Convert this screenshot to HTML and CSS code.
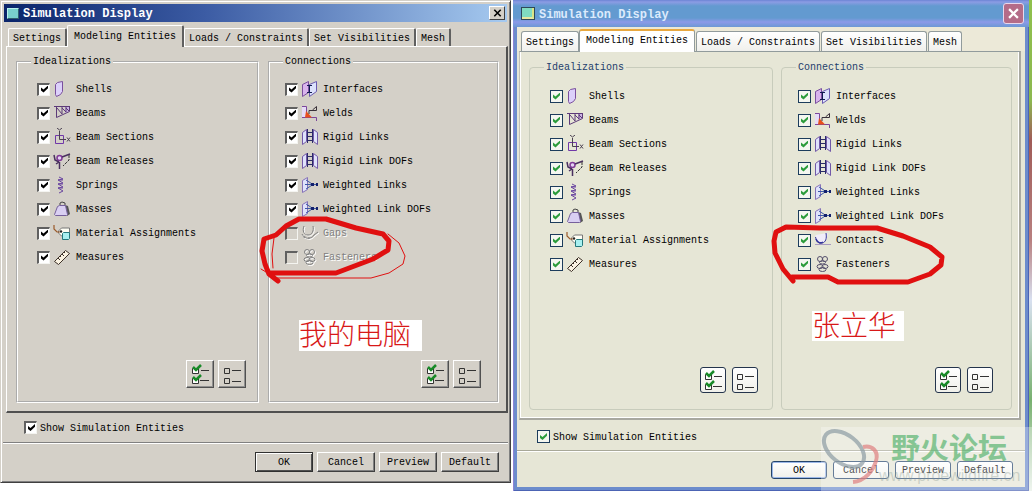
FILE: index.html
```
<!DOCTYPE html>
<html lang="en">
<head>
	<meta charset="utf-8">
	<title>Simulation Display</title>
	<link rel="stylesheet" href="styles.css">
</head>
<body>
	<!-- icon set, 18x18 grid -->
	<svg class="sprite" aria-hidden="true">
		<symbol id="i-shell" viewBox="0 0 18 18"><path d="M2.500 4.500l2-2 5-1v10l-2 3-4 2-1-2z" fill="#dcd0fa" stroke="#7a4f9e"/></symbol>
		<symbol id="i-beam" viewBox="0 0 18 18"><path d="M12 3h5v4l-5 2z" fill="#cbb4e4"/><path d="M1 2.500h16M16.500 2v5.500L3.500 13.500V3M4 4l5 6V3M9 4l4 4V3M13 4l3 3" fill="none" stroke="#5c3a78"/></symbol>
		<symbol id="i-section" viewBox="0 0 18 18"><path d="M2.500 7.500h8v8h-8z" fill="none" stroke="#7038a8"/><path d="M6.500 3v8.500H13M4 0l2.500 2L9 0M14 9.500l3 4M17 9.500l-3 4" fill="none" stroke="#4a4050"/></symbol>
		<symbol id="i-release" viewBox="0 0 18 18"><circle cx="6.500" cy="6" r="2.500" fill="#e4d4f4" stroke="#803a98" stroke-width="1.500"/><path d="M1 3l1 5 4 2M6.500 10v7M3 12l3-2M9 5l8-3" fill="none" stroke="#4a3060" stroke-width="1.500"/><path d="M16 3v5l-6 6" fill="none" stroke="#333" stroke-dasharray="3 1"/></symbol>
		<symbol id="i-spring" viewBox="0 0 18 18"><path d="M6 1l4 2-5 1 5 3-5 1 5 3-5 1 5 3-4 2M5 4h5M5 8h5M5 12h5" fill="none" stroke="#6a46a0"/></symbol>
		<symbol id="i-mass" viewBox="0 0 18 18"><path d="M12 5l3 1 2 8-3 2z" fill="#555"/><path d="M1.500 14.500l3-8 2-1h6l2 9-1 1h-11z" fill="#d9cff2" stroke="#76609c"/><path d="M7 5V3l2-1 3 1v2" fill="none" stroke="#444"/></symbol>
		<symbol id="i-material" viewBox="0 0 18 18"><path d="M5.500 7l3-3h8v8h-8l-3-3z" fill="#fffef4" stroke="#777"/><circle cx="8" cy="7.500" r="1.200" fill="#222"/><path d="M1 1v4l3 3h3" fill="none" stroke="#9a5a2a" stroke-width="1.200"/><path d="M9.500 9.500l1-1h6v6l-1 1h-6z" fill="#a8f0f0" stroke="#24787c"/></symbol>
		<symbol id="i-measure" viewBox="0 0 18 18"><path d="M1.500 13.500l11-11 4 3-11 11z" fill="#fbf3e2" stroke="#3c3028"/><path d="M5 10l2 2M7 8l1 1M9 6l2 2M11 4l1 1" stroke="#3c3028"/></symbol>
		<symbol id="i-interface" viewBox="0 0 18 18"><path d="M1.500 4.500l6-3v11l-6 4z" fill="#d8b4ec" stroke="#7a4f9e"/><path d="M8.500 4.500l7-3v10l-7 5z" fill="#dce2fc" stroke="#6a5ab0"/><path d="M6 5.500h5M8.500 5v8M6 12.500h5" stroke="#111a50"/></symbol>
		<symbol id="i-weld" viewBox="0 0 18 18"><path d="M1 3h5v11H1z" fill="#e6dcf8"/><path d="M1 2.500h4.500V10M1 13.500h14.500V17" fill="none" stroke="#7c469c"/><path d="M5 7l6 6.500H4z" fill="#e8501c"/><path d="M8 10V6.500h7.500v-4l-4 3.500" fill="none" stroke="#383038"/></symbol>
		<symbol id="i-rigid" viewBox="0 0 18 18"><path d="M1.500 4.500l4-3v12l-4 3zM12.500 1.500l4 3v12l-4-3z" fill="#dfe2fb" stroke="#7259a8"/><path d="M6.500 1v14M11.500 1v14M6 4.500h6M6 8.500h6M6 12.500h6" fill="none" stroke="#2b2b68"/></symbol>
		<symbol id="i-weighted" viewBox="0 0 18 18"><path d="M1.500 4.500l5-3v12l-5 3z" fill="#dfe2fb" stroke="#8672b8"/><path d="M5 4l7 4.500L5 13M4 8.500h12" fill="none" stroke="#3c58a8"/><path d="M10 7h3v3h-3zM15 7h2v3h-2z" fill="#13206c"/></symbol>
		<symbol id="i-contact" viewBox="0 0 18 18"><path d="M1.500 4c0 6 3 8 6 8s6-3 6-10" fill="#f0ecfa"/><path d="M1.500 6c1 5 4 7 7 6s4.500-4 3.500-10" fill="none" stroke="#34349a"/><path d="M2 8c1 3 4 5 7 3" fill="none" stroke="#34349a" stroke-width="1.500"/><path d="M1 13.500h16" stroke="#a79ac0"/></symbol>
		<symbol id="i-gap" viewBox="0 0 18 18"><path d="M3 2c-2 5 0 9 4 9s6-4 5-9M1 10c2 5 9 6 12 1M13 11l4-3M4 12l-1 2M8 13v2" fill="none" stroke="#808080"/></symbol>
		<symbol id="i-fastener" viewBox="0 0 18 18"><g fill="none" stroke="currentColor"><ellipse cx="6" cy="4" rx="2.500" ry="2.500"/><ellipse cx="11" cy="4" rx="2.500" ry="2.500"/><ellipse cx="8.500" cy="7.500" rx="3" ry="1.500"/><ellipse cx="6" cy="11.500" rx="3" ry="2"/><ellipse cx="11" cy="11.500" rx="3" ry="2"/><ellipse cx="8.500" cy="14.500" rx="3.500" ry="2"/></g></symbol>
		<symbol id="i-all" viewBox="0 0 20 20"><path d="M2.500 4.500h6v5h-6zM2.500 14.500h6v5h-6z" fill="#fff" stroke="#333"/><path d="M11 6.500h8M10 16.500h9" stroke="#333"/><path d="M3 3l3 3 5-5M3 13l3 3 5-5" fill="none" stroke="#188a28" stroke-width="2.500"/></symbol>
		<symbol id="i-none" viewBox="0 0 20 20"><path d="M2.500 4.500h5v5h-5zM2.500 14.500h5v5h-5z" fill="none" stroke="#333"/><path d="M10 6.500h9M10 17.500h9" stroke="#333"/></symbol>
	</svg>

	<main class="desktop">
		<section class="window classic">
			<header class="titlebar">
				<span class="appicon"></span>
				<h1>Simulation Display</h1>
				<button class="close" type="button" aria-label="Close"><svg viewBox="0 0 10 10"><path d="M1 1l8 8M9 1l-8 8"/></svg></button>
			</header>
			<div class="tabs" role="tablist">
				<button type="button" role="tab">Settings</button>
				<button type="button" role="tab" class="active" aria-selected="true">Modeling Entities</button>
				<button type="button" role="tab">Loads / Constraints</button>
				<button type="button" role="tab">Set Visibilities</button>
				<button type="button" role="tab">Mesh</button>
			</div>
			<div class="panel">
				<fieldset class="group ideal">
					<legend>Idealizations</legend>
					<ul>
						<li><label><input type="checkbox" checked><svg><use href="#i-shell"/></svg>Shells</label></li>
						<li><label><input type="checkbox" checked><svg><use href="#i-beam"/></svg>Beams</label></li>
						<li><label><input type="checkbox" checked><svg><use href="#i-section"/></svg>Beam Sections</label></li>
						<li><label><input type="checkbox" checked><svg><use href="#i-release"/></svg>Beam Releases</label></li>
						<li><label><input type="checkbox" checked><svg><use href="#i-spring"/></svg>Springs</label></li>
						<li><label><input type="checkbox" checked><svg><use href="#i-mass"/></svg>Masses</label></li>
						<li><label><input type="checkbox" checked><svg><use href="#i-material"/></svg>Material Assignments</label></li>
						<li><label><input type="checkbox" checked><svg><use href="#i-measure"/></svg>Measures</label></li>
					</ul>
					<div class="tools">
						<button type="button" aria-label="Select all"><svg><use href="#i-all"/></svg></button>
						<button type="button" aria-label="Select none"><svg><use href="#i-none"/></svg></button>
					</div>
				</fieldset>
				<fieldset class="group conn">
					<legend>Connections</legend>
					<ul>
						<li><label><input type="checkbox" checked><svg><use href="#i-interface"/></svg>Interfaces</label></li>
						<li><label><input type="checkbox" checked><svg><use href="#i-weld"/></svg>Welds</label></li>
						<li><label><input type="checkbox" checked><svg><use href="#i-rigid"/></svg>Rigid Links</label></li>
						<li><label><input type="checkbox" checked><svg><use href="#i-rigid"/></svg>Rigid Link DOFs</label></li>
						<li><label><input type="checkbox" checked><svg><use href="#i-weighted"/></svg>Weighted Links</label></li>
						<li><label><input type="checkbox" checked><svg><use href="#i-weighted"/></svg>Weighted Link DOFs</label></li>
						<li class="off"><label><input type="checkbox" disabled><svg><use href="#i-gap"/></svg>Gaps</label></li>
						<li class="off"><label><input type="checkbox" disabled><svg><use href="#i-fastener"/></svg>Fasteners</label></li>
					</ul>
					<div class="tools">
						<button type="button" aria-label="Select all"><svg><use href="#i-all"/></svg></button>
						<button type="button" aria-label="Select none"><svg><use href="#i-none"/></svg></button>
					</div>
				</fieldset>
			</div>
			<div class="option"><label><input type="checkbox" checked>Show Simulation Entities</label></div>
			<footer class="actions">
				<button type="button" class="default">OK</button>
				<button type="button">Cancel</button>
				<button type="button">Preview</button>
				<button type="button">Default</button>
			</footer>
			<svg class="marks" aria-hidden="true">
				<path class="thick" d="M277 280l-9-7-4-10-3-13 2-12 12-4 10-9 13-7h27l30 9 27 6 6 7-1 9-15 9-37 14h-65"/>
				<path d="M273 237l-2 16 1 14M387 233l11 9 6 13-2 8-14 9-18 5h-95l-15-9"/>
			</svg>
			<p class="note">我的电脑</p>
		</section>

		<section class="window xp">
			<header class="titlebar">
				<span class="appicon"></span>
				<h1>Simulation Display</h1>
				<button class="close" type="button" aria-label="Close"><svg viewBox="0 0 10 10"><path d="M1 1l8 8M9 1l-8 8"/></svg></button>
			</header>
			<div class="tabs" role="tablist">
				<button type="button" role="tab">Settings</button>
				<button type="button" role="tab" class="active" aria-selected="true">Modeling Entities</button>
				<button type="button" role="tab">Loads / Constraints</button>
				<button type="button" role="tab">Set Visibilities</button>
				<button type="button" role="tab">Mesh</button>
			</div>
			<div class="panel">
				<fieldset class="group ideal">
					<legend>Idealizations</legend>
					<ul>
						<li><label><input type="checkbox" checked><svg><use href="#i-shell"/></svg>Shells</label></li>
						<li><label><input type="checkbox" checked><svg><use href="#i-beam"/></svg>Beams</label></li>
						<li><label><input type="checkbox" checked><svg><use href="#i-section"/></svg>Beam Sections</label></li>
						<li><label><input type="checkbox" checked><svg><use href="#i-release"/></svg>Beam Releases</label></li>
						<li><label><input type="checkbox" checked><svg><use href="#i-spring"/></svg>Springs</label></li>
						<li><label><input type="checkbox" checked><svg><use href="#i-mass"/></svg>Masses</label></li>
						<li><label><input type="checkbox" checked><svg><use href="#i-material"/></svg>Material Assignments</label></li>
						<li><label><input type="checkbox" checked><svg><use href="#i-measure"/></svg>Measures</label></li>
					</ul>
					<div class="tools">
						<button type="button" aria-label="Select all"><svg><use href="#i-all"/></svg></button>
						<button type="button" aria-label="Select none"><svg><use href="#i-none"/></svg></button>
					</div>
				</fieldset>
				<fieldset class="group conn">
					<legend>Connections</legend>
					<ul>
						<li><label><input type="checkbox" checked><svg><use href="#i-interface"/></svg>Interfaces</label></li>
						<li><label><input type="checkbox" checked><svg><use href="#i-weld"/></svg>Welds</label></li>
						<li><label><input type="checkbox" checked><svg><use href="#i-rigid"/></svg>Rigid Links</label></li>
						<li><label><input type="checkbox" checked><svg><use href="#i-rigid"/></svg>Rigid Link DOFs</label></li>
						<li><label><input type="checkbox" checked><svg><use href="#i-weighted"/></svg>Weighted Links</label></li>
						<li><label><input type="checkbox" checked><svg><use href="#i-weighted"/></svg>Weighted Link DOFs</label></li>
						<li><label><input type="checkbox" checked><svg><use href="#i-contact"/></svg>Contacts</label></li>
						<li><label><input type="checkbox" checked><svg><use href="#i-fastener"/></svg>Fasteners</label></li>
					</ul>
					<div class="tools">
						<button type="button" aria-label="Select all"><svg><use href="#i-all"/></svg></button>
						<button type="button" aria-label="Select none"><svg><use href="#i-none"/></svg></button>
					</div>
				</fieldset>
			</div>
			<div class="option"><label><input type="checkbox" checked>Show Simulation Entities</label></div>
			<footer class="actions">
				<button type="button" class="default">OK</button>
				<button type="button">Cancel</button>
				<button type="button">Preview</button>
				<button type="button">Default</button>
			</footer>
			<svg class="marks" aria-hidden="true">
				<path class="thick" d="M280 281l-10-12-8-16-1-12 2-9 10-5 34 1h57l26 8 27 11 12 10-1 8-11 9-22 8h-70l-10-5h-36"/>
			</svg>
			<p class="note">张立华</p>
			<!-- forum watermark -->
			<div class="watermark">
				<svg viewBox="0 0 64 64">
					<ellipse cx="23" cy="22" rx="23" ry="14" transform="rotate(38 23 22)" stroke="#8d9ca4"/>
					<path d="M42 20c9-2 16 4 13 14s-11 20-23 21" stroke="#e08080"/>
				</svg>
				<strong>野火论坛</strong>
				<span>www.proewildfire.cn</span>
			</div>
		</section>
	</main>
</body>
</html>
```
FILE: styles.css
```
*{ margin: 0; padding: 0; box-sizing: border-box; }
body{ background: #fff; color: #000; font: 10px/12px "Liberation Mono", "Noto Sans CJK SC", monospace; }
ul{ list-style: none; }
button, input{ font: inherit; color: inherit; }
.sprite{ position: absolute; width: 0; height: 0; }

.desktop{ display: grid; grid-template-columns: 511fr 516fr; column-gap: 2px; align-items: start; padding-right: 3px; background: linear-gradient(#8fc04c, #8cb850 100px, #a05c58 140px, #b88080 240px, #d8e0f0 300px, #78b070 400px, #e8f0e8) right / 3px 100% no-repeat; }
.window{ position: relative; }

/* title bar */
.titlebar{ display: flex; align-items: center; }
.titlebar h1{ flex: 1; padding-top: 2px; font-size: 12px; line-height: 16px; color: #fff; }
.close{ display: flex; align-items: center; justify-content: center; }
.close svg{ flex: none; fill: none; stroke: currentColor; stroke-width: 2; }

/* tabs and panel */
.tabs{ display: flex; align-items: flex-end; }
.tabs button{ border: 0; white-space: nowrap; }
.panel{ display: grid; }
.group{ min-width: 0; }
.group legend{ margin-left: 13px; padding: 1px 2px 0; height: 13px; }
/* the face sits high in its line, so text gets 1px more above than the boxes */
.group label, .option label{ display: flex; align-items: center; padding-top: 2px; }
.group label input, .group label svg, .option input{ margin-bottom: 2px; }
.group li label{ height: 24px; }
.group li svg{ width: 18px; height: 18px; margin-left: 3px; margin-right: 5px; color: #55506c; }
.conn li svg{ margin-right: 4px; }
.tools{ display: flex; justify-content: flex-end; margin-top: 91px; }
.tools button{ display: flex; align-items: center; justify-content: center; padding: 0; }
.tools svg{ flex: none; width: 20px; height: 20px; }
input{ appearance: none; flex: none; width: 13px; height: 13px; }
input:checked::before{ content: ""; display: block; width: 7px; height: 7px; clip-path: polygon(0 28%, 36% 58%, 100% 0, 100% 40%, 36% 100%, 0 70%); }
.option input{ margin-right: 3px; }
.actions{ display: flex; justify-content: flex-end; }
.actions button{ padding-top: 1px; }

/* grey classic window */
.classic{ padding: 2px 2px 0; background: #d4d0c8; border: 1px solid; border-color: #d4d0c8 #404040 #404040 #d4d0c8; box-shadow: inset 1px 1px #fff, inset -1px -1px #808080; }
.classic .titlebar{ height: 18px; margin: 1px; padding: 0 2px 0 3px; background: linear-gradient(to right, #0a246a, #3c5ca4 40%, #a6caf0); }
.classic .appicon{ width: 12px; height: 11px; margin-right: 4px; background: #78d0cc; border: 1px solid; border-color: #b8f0ec #30606c #30606c #b8f0ec; }
.classic .close{ width: 16px; height: 14px; background: #d4d0c8; border: 1px solid; border-color: #fff #404040 #404040 #fff; }
.classic .close svg{ width: 9px; height: 8px; }
.classic .tabs{ height: 22px; padding-left: 5px; margin-top: 2px; }
.classic .tabs button{ height: 18px; padding: 3px 4px 0; background: #d4d0c8; border: solid; border-width: 1px 2px 0 1px; border-color: #fff #606060 #fff #fff; border-radius: 2px 2px 0 0; }
.classic .tabs .active{ height: 22px; margin-bottom: -1px; padding: 1px 6px 0; }
.classic .panel{ grid-template-columns: 243fr 231fr; column-gap: 9px; margin: 0 0 0 3px; padding: 8px 7px 8px 9px; border: solid; border-width: 1px 2px 2px 1px; border-color: #fff #505050 #505050 #fff; }
.classic .group{ border: 2px groove #fff; }
.classic ul{ padding: 9px 0 0 19px; }
.classic .conn ul{ padding-left: 15px; }
.classic .tools{ gap: 4px; padding: 0 11px 13px 0; }
.classic .conn .tools{ padding-right: 16px; }
.classic .tools button{ width: 28px; height: 28px; background: #d4d0c8; border: 1px solid; border-color: #fff #505050 #505050 #fff; box-shadow: inset -1px -1px #909090; }
.classic input{ padding: 1px 2px; background: #fff; border: solid; border-width: 2px 1px 1px 2px; border-color: #606060 #f4f4f0 #f4f4f0 #606060; }
.classic input:checked::before{ background: #000; }
.classic input:disabled{ background: #d4d0c8; }
.classic .off{ color: #808080; text-shadow: 1px 1px #fff; }
.classic .off svg{ color: #808080; filter: drop-shadow(1px 1px #fff); }
.classic .option{ padding: 6px 0 6px 21px; border-bottom: 1px solid #808080; }
.classic .actions{ gap: 4px; padding: 8px 9px 10px; border-top: 1px solid #fff; }
.classic .actions button{ width: 58px; height: 20px; background: #d4d0c8; border: 1px solid; border-color: #fff #404040 #404040 #fff; box-shadow: inset -1px -1px #808080; }
.classic .actions .default{ border-color: #303030; box-shadow: inset 1px 1px #fff, inset -1px -1px #505050; }

/* xp window */
.xp{ padding: 0 4px 4px; background: linear-gradient(#e6e6d6, #e6e6d6) 4px 27px / calc(100% - 8px) calc(100% - 31px) no-repeat #6c8ccc; box-shadow: inset 1px 0 #8c84d4, inset -1px -1px #4c64b4; }
.xp .titlebar{ height: 27px; margin: 0 -4px; padding: 0 5px 0 8px; background: linear-gradient(#6c84d4, #8c9ce4 2px, #639ad0 6px, #639ad0 18px, #8c9ae8 22px, #6c98d4); }
.xp .titlebar h1{ color: #dceafc; }
.xp .appicon{ width: 14px; height: 13px; margin-right: 4px; background: #80dcc0; border: solid; border-width: 1px 3px 3px 1px; border-color: #202820 #d8e488 #e8e8a0 #202820; outline: 1px solid #304858; outline-offset: -1px; }
.xp .close{ width: 21px; height: 21px; color: #fff; background: #b46c88; border: 1px solid #e8d8ec; border-radius: 3px; }
.xp .close svg{ width: 11px; height: 11px; }
.xp .tabs{ height: 24px; gap: 1px; padding-left: 4px; background: #ece9d8; }
.xp .tabs button{ height: 20px; padding: 2px 4px 0; background: linear-gradient(#fff, #f0f0ec); border: 1px solid #919b9c; border-bottom: 0; border-radius: 3px 3px 0 0; }
.xp .tabs .active{ height: 23px; margin: 0 0 -1px -1px; padding: 0 6px 1px; background: #fff; border-top: 2px solid #e8a840; }
.xp .panel{ grid-template-columns: 244fr 231fr; column-gap: 8px; padding: 9px 7px 8px 9px; background: #e6e6d6; border: solid; border-width: 1px 2px 2px 1px; border-color: #919b9c #a8a8a0 #a8a8a0 #c0c0b8; box-shadow: inset 1px 0 #fff, inset -1px -1px #fff; margin: 0 4px 0 2px; }
.xp .group{ border: 1px solid #c8ccbc; border-radius: 4px; }
.xp .group legend{ margin-left: 14px; color: #24406c; }
.xp ul{ padding: 10px 0 0 20px; }
.xp .conn ul{ padding-left: 16px; }
.xp .tools{ gap: 6px; padding: 0 14px 16px 0; }
.xp .conn .tools{ padding-right: 18px; }
.xp .tools button{ width: 26px; height: 26px; background: linear-gradient(#fff, #f0f0ea); border: 1px solid #24344c; border-radius: 3px; }
.xp input{ padding: 2px; background: #f4f6f0; border: 1px solid #1c3c5c; }
.xp input:checked::before{ background: #2c9c3c; }
.xp .option{ padding: 8px 0 5px 20px; border-bottom: 1px solid #a8a898; }
.xp .actions{ gap: 6px; padding: 9px 12px 8px; border-top: 1px solid #fff; }
.xp .actions button{ width: 56px; height: 18px; background: linear-gradient(#fff, #f0f0ea); border: 1px solid #24446c; border-radius: 3px; }
.xp .actions .default{ box-shadow: inset 0 0 0 1px #9cb8e8; }

/* pen marks and notes drawn over the windows */
.marks{ position: absolute; top: 0; left: 0; width: 100%; height: 100%; pointer-events: none; fill: none; stroke: #e01010; stroke-linejoin: round; stroke-linecap: round; }
.marks .thick{ stroke-width: 5; }
.note{ position: absolute; background: #fff; color: #d81818; font: 300 28px/26px "Noto Sans CJK SC", sans-serif; white-space: nowrap; }
.classic .note{ left: 298px; top: 319px; width: 123px; height: 31px; }
.xp .note{ left: 299px; top: 311px; width: 92px; height: 30px; }

.watermark{ position: absolute; right: -3px; bottom: 0; width: 211px; height: 64px; padding: 0 0 0 58px; background: rgba(255, 255, 255, .3); pointer-events: none; }
.watermark svg{ position: absolute; left: 0; top: 0; width: 64px; height: 64px; fill: none; stroke-width: 4; opacity: .7; }
.watermark strong, .watermark span{ display: block; white-space: nowrap; }
.watermark strong{ padding-left: 12px; font: 700 29px/38px "Noto Sans CJK SC", sans-serif; color: rgba(88, 180, 112, .7); }
.watermark span{ padding-top: 2px; font: 16px/18px "Liberation Sans", sans-serif; color: rgba(130, 150, 140, .35); }
```
